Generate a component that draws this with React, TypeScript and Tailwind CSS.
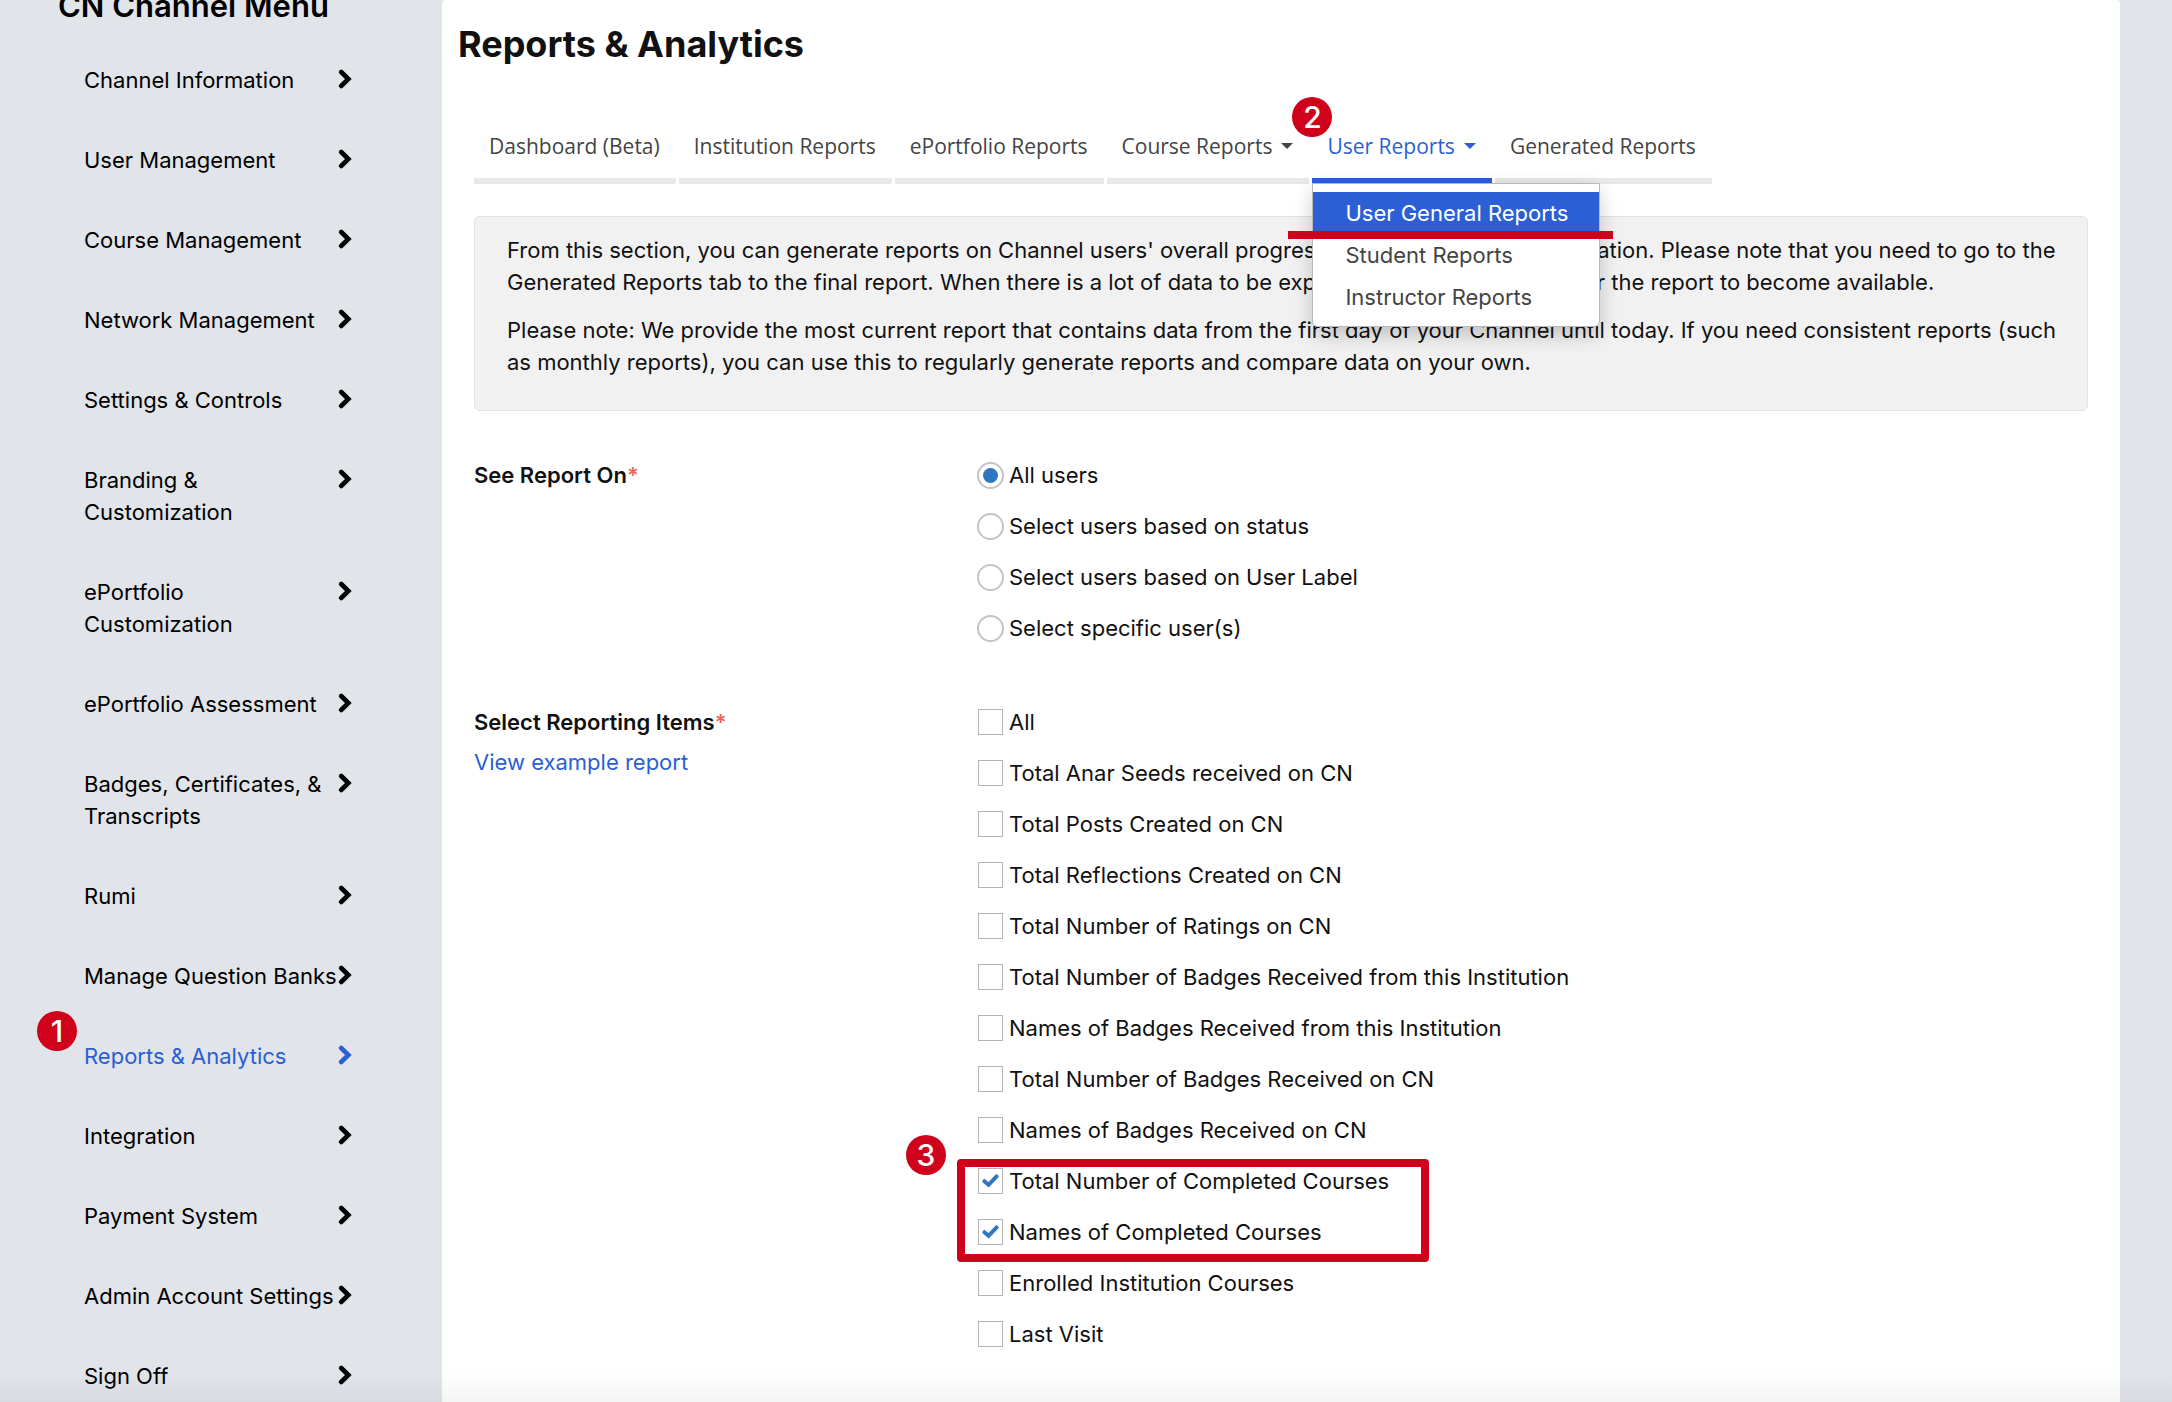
import { ReactNode } from "react";

const menuItems = [
  "Channel Information",
  "User Management",
  "Course Management",
  "Network Management",
  "Settings & Controls",
  "Branding & Customization",
  "ePortfolio Customization",
  "ePortfolio Assessment",
  "Badges, Certificates, & Transcripts",
  "Rumi",
  "Manage Question Banks",
  "Reports & Analytics",
  "Integration",
  "Payment System",
  "Admin Account Settings",
  "Sign Off",
];

const userOptions = [
  "All users",
  "Select users based on status",
  "Select users based on User Label",
  "Select specific user(s)",
];

const reportItems = [
  "All",
  "Total Anar Seeds received on CN",
  "Total Posts Created on CN",
  "Total Reflections Created on CN",
  "Total Number of Ratings on CN",
  "Total Number of Badges Received from this Institution",
  "Names of Badges Received from this Institution",
  "Total Number of Badges Received on CN",
  "Names of Badges Received on CN",
];

const completedItems = ["Total Number of Completed Courses", "Names of Completed Courses"];

const otherItems = ["Enrolled Institution Courses", "Last Visit"];

function StepBadge({ step, className }: { step: number; className: string }) {
  return (
    <span
      className={`absolute z-20 flex size-10 items-center justify-center rounded-full bg-[#d0021b] text-[30px] leading-none font-medium text-white ${className}`}
    >
      {step}
    </span>
  );
}

function Chevron() {
  return (
    <svg viewBox="0 0 14 20" className="mt-[5px] h-5 w-3.5 shrink-0" fill="none" stroke="currentColor" aria-hidden="true">
      <path d="M3.2 3 10.4 10l-7.2 7" strokeWidth="4.6" strokeLinecap="round" />
    </svg>
  );
}

function Caret() {
  return (
    <svg viewBox="0 0 12 6" className="ml-[9px] h-1.5 w-3" fill="currentColor" aria-hidden="true">
      <path d="M0 0h12L6 6z" />
    </svg>
  );
}

function Tab({ active, caret, children }: { active?: boolean; caret?: boolean; children: ReactNode }) {
  return (
    <button
      type="button"
      className={`flex items-center border-b-[6px] pt-3 pr-4 pb-4 pl-[15px] font-['Open_Sans',sans-serif] text-[21px] leading-8 ${
        active ? "border-[#2b5fd3] text-[#2b5fd3]" : "border-[#e8e8e8] text-[#444]"
      }`}
    >
      {children}
      {caret && <Caret />}
    </button>
  );
}

function Checkbox({ label, checked }: { label: string; checked?: boolean }) {
  return (
    <label className="flex h-8 items-center gap-1.5">
      <span className="relative ml-px flex">
        <input
          type="checkbox"
          defaultChecked={checked}
          className="peer h-[26px] w-[25px] appearance-none border border-[#b4b4b4] bg-white"
        />
        <svg
          viewBox="0 0 25 26"
          className="pointer-events-none absolute inset-0 hidden size-full peer-checked:block"
          fill="none"
          stroke="#2f76c1"
          strokeWidth="4"
          strokeLinecap="round"
        >
          <path d="M6.4 13.2 10.6 16.8 18.6 8.4" />
        </svg>
      </span>
      {label}
    </label>
  );
}

function Radio({ label, checked }: { label: string; checked?: boolean }) {
  return (
    <label className="flex h-8 items-center gap-[5px]">
      <span className="relative flex">
        <input
          type="radio"
          name="report-on"
          defaultChecked={checked}
          className="peer size-[27px] appearance-none rounded-full border-2 border-[#c4c4c4] bg-white"
        />
        <span className="pointer-events-none absolute inset-1.5 hidden rounded-full bg-[#2f76c1] peer-checked:block" />
      </span>
      {label}
    </label>
  );
}

function Sidebar() {
  return (
    <aside className="w-[442px] shrink-0 pl-[58px] text-black">
      <h2 className="-mt-5 text-[31px] leading-[52px] font-semibold">CN Channel Menu</h2>
      <nav className="mt-2 ml-[26px] w-[268px]">
        {menuItems.map((item) => {
          const active = item === "Reports & Analytics";
          return (
            <a key={item} href="#" className={`relative flex justify-between py-6 ${active ? "text-[#2b5fd3]" : ""}`}>
              {active && <StepBadge step={1} className="-top-[5px] -left-[47px]" />}
              <span>{item}</span>
              <Chevron />
            </a>
          );
        })}
      </nav>
    </aside>
  );
}

function UserReportsMenu() {
  return (
    <div className="absolute top-full left-0 z-10 -mt-px w-72 rounded-b-md border border-[#b9b9b9] bg-white py-2 whitespace-nowrap shadow-[0_8px_20px_rgba(0,0,0,0.2)]">
      <div className="relative">
        <a href="#" className="block bg-[#2b5fd3] px-8 py-[5px] text-white">
          User General Reports
        </a>
        <span className="absolute -right-3.5 -bottom-[5px] -left-[25px] h-2 bg-[#d0021b]" />
      </div>
      <a href="#" className="block px-8 py-[5px] text-[#444]">
        Student Reports
      </a>
      <a href="#" className="block px-8 py-[5px] text-[#444]">
        Instructor Reports
      </a>
    </div>
  );
}

export default function App() {
  return (
    <div className="relative flex h-screen overflow-hidden bg-[#e1e4e9] font-['Inter',sans-serif] text-[22px] leading-8 text-[#111]">
      <Sidebar />

      <main className="mr-[52px] flex-1 rounded-t bg-white px-8 pt-5">
        <h1 className="-ml-4 text-[36px] leading-[48px] font-bold">Reports &amp; Analytics</h1>

        <div className="mt-[50px] flex gap-[3px]">
          <Tab>Dashboard (Beta)</Tab>
          <Tab>Institution Reports</Tab>
          <Tab>ePortfolio Reports</Tab>
          <Tab caret>Course Reports</Tab>
          <div className="relative">
            <StepBadge step={2} className="-top-[21px] -left-5" />
            <Tab active caret>
              User Reports
            </Tab>
            <UserReportsMenu />
          </div>
          <Tab>Generated Reports</Tab>
        </div>

        <section className="mt-8 space-y-4 rounded-md border border-[#dfe1e3] bg-[#f1f1f1] pt-[17px] pr-6 pb-8 pl-8">
          <p>
            From this section, you can generate reports on Channel users' overall progress, enrollments, and
            participation. Please note that you need to go to the Generated Reports tab to the final report. When
            there is a lot of data to be exported, it can take a while for the report to become available.
          </p>
          <p>
            Please note: We provide the most current report that contains data from the first day of your Channel
            until today. If you need consistent reports (such as monthly reports), you can use this to regularly
            generate reports and compare data on your own.
          </p>
        </section>

        <form className="mt-12 grid grid-cols-[503px_1fr] gap-y-[62px]">
          <h3 className="font-semibold">
            See Report On<span className="text-[#f0625a]">*</span>
          </h3>
          <div className="flex flex-col gap-[19px]">
            {userOptions.map((option, i) => (
              <Radio key={option} label={option} checked={i === 0} />
            ))}
          </div>

          <div>
            <h3 className="font-semibold">
              Select Reporting Items<span className="text-[#f0625a]">*</span>
            </h3>
            <a href="#" className="mt-2 block text-[#2b5fd3]">
              View example report
            </a>
          </div>
          <div className="flex flex-col gap-[19px]">
            {reportItems.map((item) => (
              <Checkbox key={item} label={item} />
            ))}
            <div className="relative flex w-fit flex-col gap-[19px]">
              <StepBadge step={3} className="-top-[30px] -left-[71px]" />
              <span className="pointer-events-none absolute -top-1.5 -right-10 -bottom-3.5 -left-5 rounded border-8 border-[#d0021b]" />
              {completedItems.map((item) => (
                <Checkbox key={item} label={item} checked />
              ))}
            </div>
            {otherItems.map((item) => (
              <Checkbox key={item} label={item} />
            ))}
          </div>
        </form>
      </main>

      <div className="pointer-events-none absolute inset-x-0 bottom-0 h-8 bg-linear-to-b from-transparent to-black/4" />
    </div>
  );
}
